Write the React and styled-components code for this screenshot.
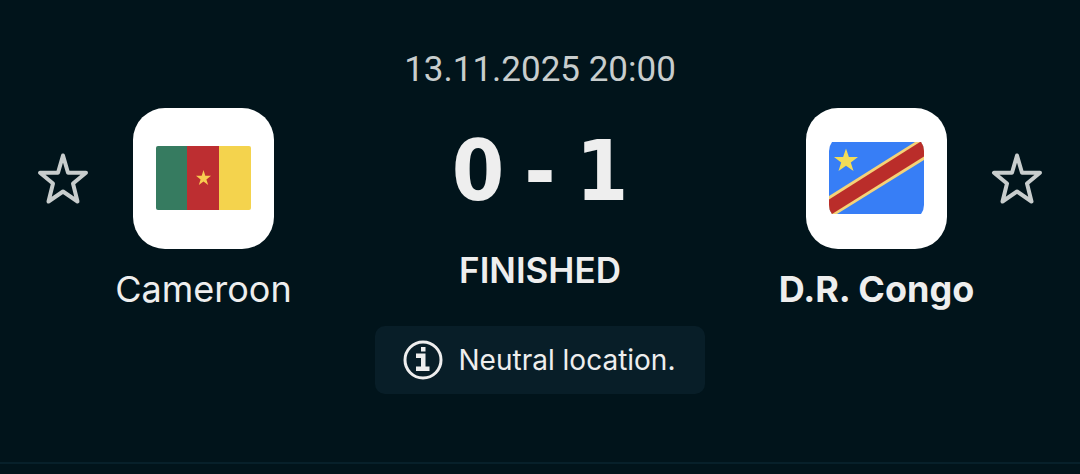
import styled, { createGlobalStyle } from "styled-components";

const GlobalStyle = createGlobalStyle`
  * {
    box-sizing: border-box;
  }
  body {
    margin: 0;
    background-color: #01141b;
    color: #eeeeee;
    font-family: Inter, "Liberation Sans", sans-serif;
  }
`;

const MatchHeader = styled.header`
  display: flex;
  flex-direction: column;
  align-items: center;
  padding: 50px 36px 68px;
  border-bottom: 2px solid #07202a;
`;

const StartTime = styled.time`
  color: #c8cdcd;
  font-family: Roboto, "Liberation Sans", sans-serif;
  font-size: 35px;
  line-height: 40px;
`;

const Duel = styled.div`
  display: grid;
  grid-template-columns: 54px 227px 1fr 227px 54px;
  width: 100%;
  margin-top: 18px;
`;

const FavoriteButton = styled.button`
  display: flex;
  align-items: center;
  justify-content: center;
  height: 141px;
  padding: 0;
  border: none;
  background: none;
  color: #c8cdcd;
  cursor: pointer;
`;

const Team = styled.div`
  display: flex;
  flex-direction: column;
  align-items: center;
  gap: 20px;
`;

const TeamLogo = styled.div`
  display: flex;
  align-items: center;
  justify-content: center;
  width: 141px;
  height: 141px;
  padding-bottom: 2px;
  border-radius: 32px;
  background-color: #ffffff;
`;

const TeamName = styled.a`
  color: #eeeeee;
  font-size: 36px;
  font-weight: ${({ $winner }) => ($winner ? 700 : 400)};
  line-height: 40px;
  text-decoration: none;
  white-space: nowrap;
`;

const Result = styled.div`
  display: flex;
  flex-direction: column;
  align-items: center;
`;

const Score = styled.div`
  display: flex;
  gap: 20px;
  font-family: "DejaVu Sans Condensed", "DejaVu Sans", sans-serif;
  font-size: 84px;
  font-weight: 700;
  line-height: 126px;
`;

const Status = styled.div`
  margin-top: 16px;
  font-size: 35px;
  font-weight: 600;
  line-height: 40px;
`;

const Notice = styled.div`
  display: flex;
  align-items: center;
  gap: 16px;
  margin-top: 17px;
  padding: 14px 30px 14px 28px;
  border-radius: 10px;
  background-color: #081e28;
  font-size: 28px;
  line-height: 40px;
`;

function StarIcon() {
  return (
    <svg width="54" height="54" viewBox="0 0 54 54" fill="none" aria-hidden="true">
      <path
        d="M27 3.500 32 20.800H50L37 31.500 41.500 49.500 27 39.500 12.500 49.500 17 31.500 4 20.800H22Z"
        stroke="currentColor"
        strokeWidth="4"
        strokeLinejoin="round"
      />
    </svg>
  );
}

function CameroonFlag() {
  return (
    <svg width="95" height="64" viewBox="0 0 95 64" role="img" aria-label="Cameroon flag">
      <clipPath id="cm-round">
        <rect width="95" height="64" rx="2" />
      </clipPath>
      <g clipPath="url(#cm-round)">
        <path fill="#367b60" d="M0 0h32v64H0z" />
        <path fill="#bd2e31" d="M31 0h33v64H31z" />
        <path fill="#f4d34d" d="M63 0h32v64H63z" />
        <path
          fill="#f8cc50"
          d="M47.5 24 49.300 29.800H55L50.400 33.400 52.200 39 47.500 35.600 42.800 39 44.600 33.400 40 29.800H45.700Z"
        />
      </g>
    </svg>
  );
}

function CongoFlag() {
  return (
    <svg width="95" height="72" viewBox="0 0 95 72" role="img" aria-label="D.R. Congo flag">
      <clipPath id="cd-round">
        <path d="M3 0H92Q95 4 95 9V63Q95 68 92 72H3Q0 68 0 63V9Q0 4 3 0Z" />
      </clipPath>
      <g clipPath="url(#cd-round)">
        <path fill="#377ef6" d="M0 0h95v72H0z" />
        <path fill="#f5d277" d="M0 54 86 0H95V18L8 72H0Z" />
        <path fill="#ba2d2a" d="M0 57.500 91 0H95V14.500L3 72H0Z" />
        <path
          fill="#f2dc57"
          d="M17 6.500 19.900 15H29L21.800 20.500 24.500 29 17 23.800 9.500 29 12.200 20.500 5 15H14.100Z"
        />
      </g>
    </svg>
  );
}

function InfoIcon() {
  return (
    <svg width="40" height="40" viewBox="0 0 40 40" fill="none" aria-hidden="true">
      <circle cx="20" cy="20" r="18" stroke="#eeeeee" strokeWidth="3" />
      <path fill="#eeeeee" d="M18 7h4.500v4.500H18zM13 13.500h9.500v13h4V31H13v-4.500h5V18h-5z" />
    </svg>
  );
}

export default function App() {
  return (
    <>
      <GlobalStyle />
      <MatchHeader>
        <StartTime dateTime="2025-11-13T20:00">13.11.2025 20:00</StartTime>
        <Duel>
          <FavoriteButton type="button" aria-label="Add Cameroon to favorites">
            <StarIcon />
          </FavoriteButton>
          <Team>
            <TeamLogo>
              <CameroonFlag />
            </TeamLogo>
            <TeamName href="#cameroon">Cameroon</TeamName>
          </Team>
          <Result>
            <Score>
              <span>0</span>
              <span>-</span>
              <span>1</span>
            </Score>
            <Status>FINISHED</Status>
          </Result>
          <Team>
            <TeamLogo>
              <CongoFlag />
            </TeamLogo>
            <TeamName href="#dr-congo" $winner>
              D.R. Congo
            </TeamName>
          </Team>
          <FavoriteButton type="button" aria-label="Add D.R. Congo to favorites">
            <StarIcon />
          </FavoriteButton>
        </Duel>
        <Notice>
          <InfoIcon />
          <span>Neutral location.</span>
        </Notice>
      </MatchHeader>
    </>
  );
}
